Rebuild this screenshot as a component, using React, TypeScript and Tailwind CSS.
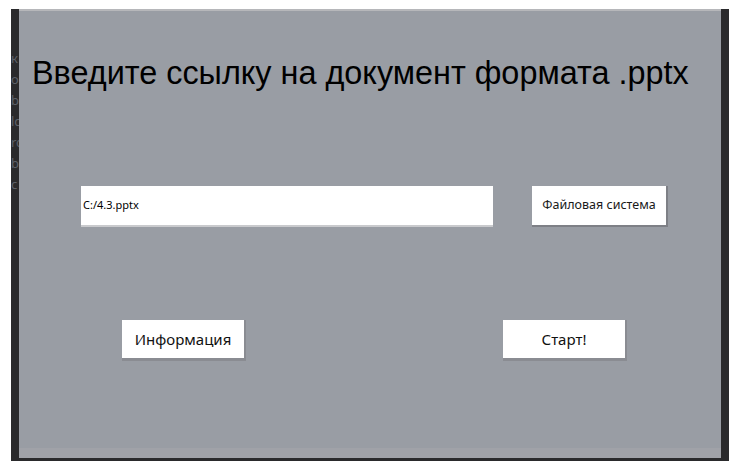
import React from "react";

export default function App() {
  return (
    <div className="w-[740px] h-[470px] bg-white pl-[11px] pt-[9px] overflow-hidden">
      <div className="w-[718px] h-[452px] flex flex-col">
        <div className="flex flex-1 min-h-0">
          {/* left dark strip with faint background text */}
          <div className="w-[8px] bg-[#2a2a2c] flex flex-col pt-[40px] gap-[3px] overflow-hidden text-[13px] leading-[18px] text-[#5c6068] [font-family:'Noto_Sans',sans-serif]">
            <span>к</span>
            <span>о</span>
            <span>b</span>
            <span>lc</span>
            <span>rc</span>
            <span>b</span>
            <span>c</span>
          </div>
          {/* main gray panel */}
          <div className="flex-1 bg-[#999da4] border-t-[2px] border-[#b6b7ba] flex flex-col">
            <h1 className="mt-[44px] ml-[13px] text-[32.4px] leading-[36px] text-black [font-family:'Liberation_Sans',Arial,sans-serif] whitespace-nowrap">
              Введите ссылку на документ формата .pptx
            </h1>
            <div className="mt-[95px] flex items-start">
              <div className="ml-[62px] w-[412px] h-[41px] bg-white border-b-[2px] border-[#c9cacd] flex items-center pl-[2px] text-[11px] text-black [font-family:'Noto_Sans',sans-serif]">
                C:/4.3.pptx
              </div>
              <button className="ml-[39px] w-[136px] h-[41px] bg-white border-r-[2px] border-b-[2px] border-[#7e8086] flex items-center justify-center text-[12.5px] text-[#1a1a1a] [font-family:'Noto_Sans',sans-serif] whitespace-nowrap">
                Файловая система
              </button>
            </div>
            <div className="mt-[93px] flex items-start">
              <button className="ml-[103px] w-[124px] h-[41px] bg-white border-r-[2px] border-b-[3px] border-[#8a8c92] flex items-center justify-center text-[15px] text-[#111] [font-family:'Noto_Sans',sans-serif]">
                Информация
              </button>
              <button className="ml-[257px] w-[124px] h-[41px] bg-white border-r-[2px] border-b-[3px] border-[#8a8c92] flex items-center justify-center text-[15px] text-[#111] [font-family:'Noto_Sans',sans-serif]">
                Старт!
              </button>
            </div>
            <div className="flex-1" />
            <div className="h-[10px] bg-[#a0a2a8]" />
          </div>
          {/* right dark strip */}
          <div className="w-[8px] bg-[#2a2a2c]" />
        </div>
        <div className="h-[3px] bg-[#2a2a2c]" />
      </div>
    </div>
  );
}
